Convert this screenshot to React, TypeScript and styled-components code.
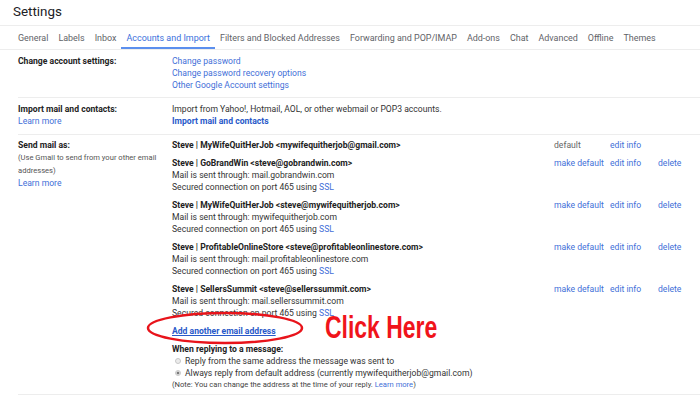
import React from "react";
import styled, { createGlobalStyle } from "styled-components";

const Global = createGlobalStyle`
  html, body { margin: 0; padding: 0; background: #fff; }
  body { font-family: Roboto, Arial, sans-serif; color: #222; }
`;

const Page = styled.div`
  position: relative;
  width: 700px;
  height: 400px;
  overflow: hidden;
  background: #fff;
`;

const Title = styled.div`
  height: 25px;
  padding-left: 13px;
  font-size: 13.4px;
  line-height: 23px;
  color: #202124;
`;

const TabBar = styled.div`
  display: flex;
  height: 23px;
  padding-left: 13px;
  border-top: 1px solid #ededed;
  border-bottom: 1px solid #ededed;
`;

const Tab = styled.div<{ $active?: boolean }>`
  flex-shrink: 0;
  white-space: nowrap;
  padding: 0 5px;
  font-size: 8.95px;
  line-height: 25px;
  color: ${(p) => (p.$active ? "#3a70dc" : "#5f6368")};
  box-shadow: ${(p) => (p.$active ? "inset 0 -2px 0 #5b8fee" : "none")};
`;

const Section = styled.div<{ $pt: number; $pb: number }>`
  display: grid;
  grid-template-columns: 154px 1fr;
  margin-left: 18px;
  padding: ${(p) => p.$pt}px 0 ${(p) => p.$pb}px;
  border-bottom: 1px solid #ededed;
  font-size: 8.6px;
  line-height: 12px;
`;

const Label = styled.div`
  display: flex;
  flex-direction: column;
`;

const LabelTitle = styled.div`
  font-weight: 700;
  color: #222;
`;

const Hint = styled.div`
  font-size: 7.6px;
  line-height: 13px;
  color: #555;
`;

const Content = styled.div`
  display: flex;
  flex-direction: column;
`;

const Link = styled.a<{ $bold?: boolean; $under?: boolean }>`
  color: ${(p) => (p.$bold ? "#2859c9" : "#3f6fd8")};
  text-decoration: ${(p) => (p.$under ? "underline" : "none")};
  font-weight: ${(p) => (p.$bold ? 700 : 400)};
  cursor: pointer;
`;

const Text = styled.div`
  color: #333;
  white-space: nowrap;
`;

const AccountRow = styled.div<{ $first?: boolean }>`
  display: grid;
  grid-template-columns: 382px 56px 48px 1fr;
  margin-top: ${(p) => (p.$first ? 0 : 6)}px;
`;

const AccountInfo = styled.div`
  display: flex;
  flex-direction: column;
`;

const AccountName = styled.div`
  font-weight: 700;
  color: #222;
  white-space: nowrap;
`;

const Action = styled.div<{ $muted?: boolean }>`
  color: ${(p) => (p.$muted ? "#666" : "#3f6fd8")};
  white-space: nowrap;
`;

const AddLink = styled.div`
  margin-top: 6px;
`;

const ReplyTitle = styled.div`
  margin-top: 6px;
  font-weight: 700;
  color: #222;
`;

const RadioRow = styled.div`
  display: flex;
  align-items: center;
  gap: 4px;
  padding-left: 3px;
`;

const Radio = styled.span<{ $checked?: boolean }>`
  box-sizing: border-box;
  width: 6px;
  height: 6px;
  border-radius: 50%;
  border: 1px solid #c8c8c8;
  background: ${(p) =>
    p.$checked ? "radial-gradient(circle, #7a7a7a 0 1.2px, #ececec 1.7px)" : "#ececec"};
`;

const Note = styled.div`
  font-size: 7.6px;
  line-height: 11px;
  color: #444;
  white-space: nowrap;
`;

const Ellipse = styled.svg`
  position: absolute;
  left: 144px;
  top: 310px;
`;

const Callout = styled.div`
  position: absolute;
  left: 325px;
  top: 308px;
  font-family: "Liberation Sans", Arial, sans-serif;
  font-weight: 700;
  font-size: 31px;
  line-height: 40px;
  color: #f0141b;
  transform: scaleX(0.74);
  transform-origin: left center;
  white-space: nowrap;
`;

const tabs = [
  "General",
  "Labels",
  "Inbox",
  "Accounts and Import",
  "Filters and Blocked Addresses",
  "Forwarding and POP/IMAP",
  "Add-ons",
  "Chat",
  "Advanced",
  "Offline",
  "Themes",
];

type Acc = { name: string; server?: string; isDefault?: boolean };

const accounts: Acc[] = [
  { name: "Steve | MyWifeQuitHerJob <mywifequitherjob@gmail.com>", isDefault: true },
  { name: "Steve | GoBrandWin <steve@gobrandwin.com>", server: "mail.gobrandwin.com" },
  { name: "Steve | MyWifeQuitHerJob <steve@mywifequitherjob.com>", server: "mywifequitherjob.com" },
  { name: "Steve | ProfitableOnlineStore <steve@profitableonlinestore.com>", server: "mail.profitableonlinestore.com" },
  { name: "Steve | SellersSummit <steve@sellerssummit.com>", server: "mail.sellerssummit.com" },
];

export default function App() {
  return (
    <Page>
      <Global />
      <Title>Settings</Title>
      <TabBar>
        {tabs.map((t) => (
          <Tab key={t} $active={t === "Accounts and Import"}>
            {t}
          </Tab>
        ))}
      </TabBar>

      <Section $pt={5} $pb={6}>
        <Label>
          <LabelTitle>Change account settings:</LabelTitle>
        </Label>
        <Content>
          <Link>Change password</Link>
          <Link>Change password recovery options</Link>
          <Link>Other Google Account settings</Link>
        </Content>
      </Section>

      <Section $pt={5} $pb={7}>
        <Label>
          <LabelTitle>Import mail and contacts:</LabelTitle>
          <Link>Learn more</Link>
        </Label>
        <Content>
          <Text>Import from Yahoo!, Hotmail, AOL, or other webmail or POP3 accounts.</Text>
          <Link $bold>Import mail and contacts</Link>
        </Content>
      </Section>

      <Section $pt={4} $pb={4}>
        <Label>
          <LabelTitle>Send mail as:</LabelTitle>
          <Hint>
            (Use Gmail to send from your other email
            <br />
            addresses)
          </Hint>
          <Link>Learn more</Link>
        </Label>
        <Content>
          {accounts.map((a, i) => (
            <AccountRow key={a.name} $first={i === 0}>
              <AccountInfo>
                <AccountName>{a.name}</AccountName>
                {a.server && (
                  <>
                    <Text>Mail is sent through: {a.server}</Text>
                    <Text>
                      Secured connection on port 465 using <Link>SSL</Link>
                    </Text>
                  </>
                )}
              </AccountInfo>
              {a.isDefault ? <Action $muted>default</Action> : <Action>make default</Action>}
              <Action>edit info</Action>
              {a.isDefault ? <span /> : <Action>delete</Action>}
            </AccountRow>
          ))}
          <AddLink>
            <Link $bold $under>
              Add another email address
            </Link>
          </AddLink>
          <ReplyTitle>When replying to a message:</ReplyTitle>
          <RadioRow>
            <Radio />
            <Text>Reply from the same address the message was sent to</Text>
          </RadioRow>
          <RadioRow>
            <Radio $checked />
            <Text>Always reply from default address (currently mywifequitherjob@gmail.com)</Text>
          </RadioRow>
          <Note>
            (Note: You can change the address at the time of your reply. <Link>Learn more</Link>)
          </Note>
        </Content>
      </Section>

      <Ellipse width="162" height="36" viewBox="0 0 162 36">
        <ellipse cx="81" cy="18" rx="77" ry="15" fill="none" stroke="#e8141b" strokeWidth="2.5" />
      </Ellipse>
      <Callout>Click Here</Callout>
    </Page>
  );
}
